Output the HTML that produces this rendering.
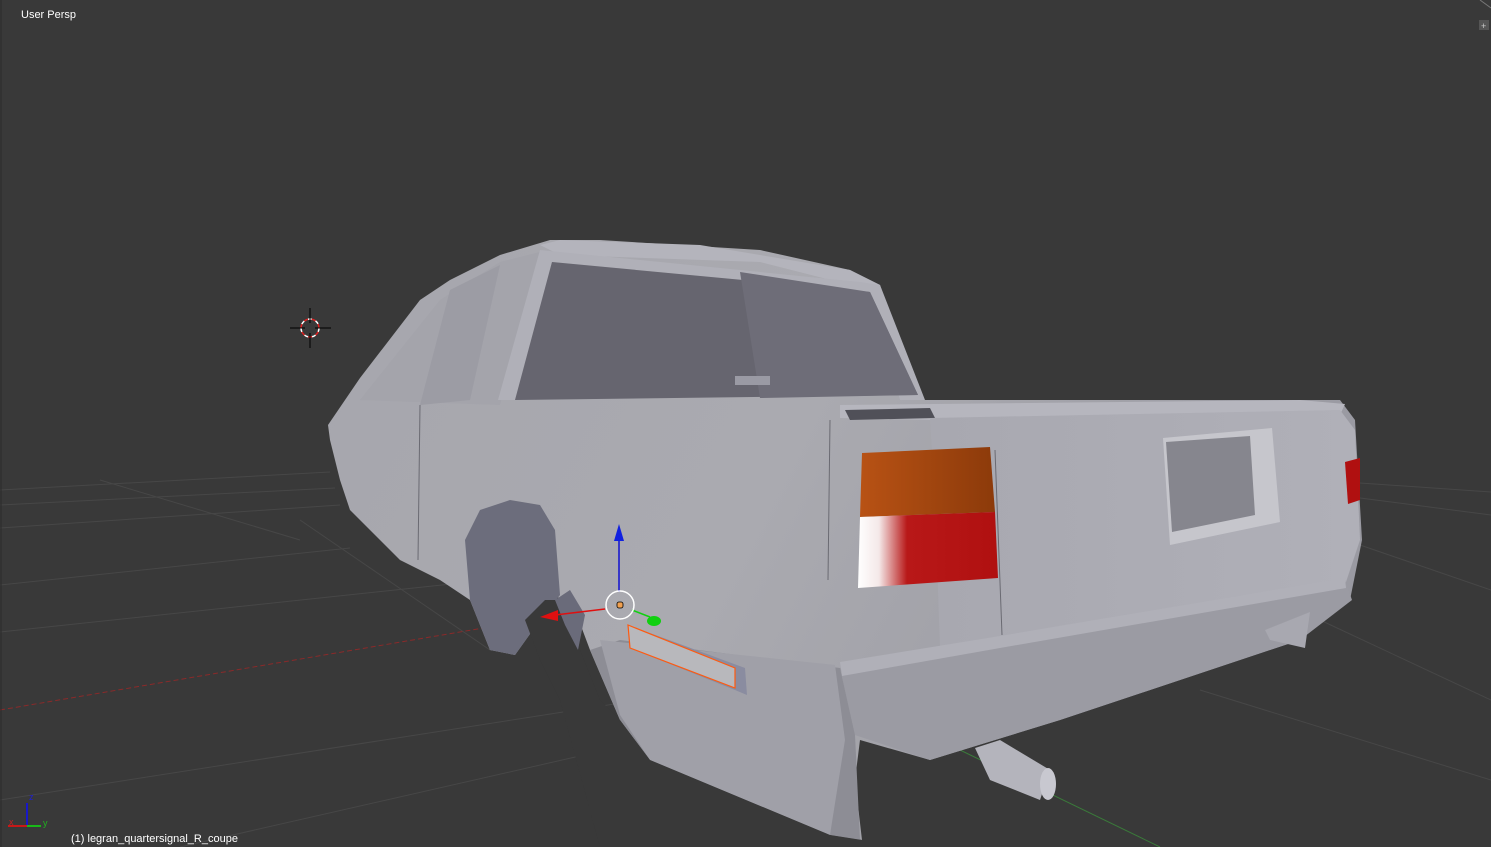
<!DOCTYPE html>
<html><head><meta charset="utf-8"><style>
html,body{margin:0;padding:0;background:#393939;overflow:hidden}
svg{display:block}
text{font-family:"Liberation Sans","DejaVu Sans",sans-serif}
</style></head><body>
<svg width="1491" height="847" viewBox="0 0 1491 847" xmlns="http://www.w3.org/2000/svg">
<defs>
<linearGradient id="side" x1="0" y1="0" x2="1" y2="0.3">
<stop offset="0" stop-color="#a6a6ad"/><stop offset="0.5" stop-color="#aaaab0"/><stop offset="1" stop-color="#9a9aa2"/></linearGradient>
<linearGradient id="rear" x1="0" y1="0" x2="1" y2="0">
<stop offset="0" stop-color="#a8a8b0"/><stop offset="1" stop-color="#b0b0b8"/></linearGradient>
<linearGradient id="red" x1="0" y1="0" x2="1" y2="0">
<stop offset="0" stop-color="#ffffff"/><stop offset="0.15" stop-color="#f4e8e8"/><stop offset="0.35" stop-color="#b81818"/><stop offset="1" stop-color="#b01010"/></linearGradient>
<linearGradient id="org" x1="0" y1="0" x2="1" y2="0">
<stop offset="0" stop-color="#b85214"/><stop offset="1" stop-color="#8c3a0a"/></linearGradient>
</defs>
<rect width="1491" height="847" fill="#393939"/>
<g stroke="#474747" stroke-width="1" fill="none">
<line x1="0" y1="490" x2="330" y2="472"/>
<line x1="0" y1="505" x2="335" y2="488"/>
<line x1="0" y1="528" x2="340" y2="505"/>
<line x1="0" y1="585" x2="350" y2="548"/>
<line x1="0" y1="632" x2="470" y2="582"/>
<line x1="0" y1="800" x2="640" y2="700"/>
<line x1="180" y1="847" x2="650" y2="740"/>
<line x1="1360" y1="483" x2="1491" y2="492"/>
<line x1="1360" y1="498" x2="1491" y2="515"/>
<line x1="1360" y1="545" x2="1491" y2="590"/>
<line x1="1320" y1="620" x2="1491" y2="700"/>
<line x1="1200" y1="690" x2="1491" y2="780"/>
<line x1="300" y1="520" x2="490" y2="650"/>
<line x1="100" y1="480" x2="300" y2="540"/>
</g>
<line x1="0" y1="710" x2="560" y2="615" stroke="#8a2a2a" stroke-width="1" stroke-dasharray="5,3"/>
<line x1="960" y1="750" x2="1160" y2="847" stroke="#3a7a3a" stroke-width="1"/>
<!-- car body -->
<polygon fill="url(#side)" points="328,425 360,378 420,300 450,280 500,255 550,240 600,240 760,250 850,270 880,285 920,400 1340,400 1355,420 1362,540 1350,600 1300,640 1060,720 930,760 860,740 855,780 862,840 830,835 650,760 620,720 590,650 575,610 555,595 540,620 515,655 490,650 470,600 440,580 400,560 350,510 340,480 330,440"/>
<!-- roof top edge -->
<polygon fill="#b4b4bc" points="540,245 560,240 700,245 850,270 880,285 870,290 760,262 560,255"/>
<!-- side glass -->
<polygon fill="#a4a4ab" points="360,400 440,300 500,262 540,252 500,405"/>
<polygon fill="#9c9ca4" points="450,290 500,265 470,400 420,405"/>
<!-- rear window -->
<polygon fill="#b0b0b8" points="540,250 560,252 860,282 880,285 925,400 900,400 870,292 552,262 515,400 498,400"/>
<polygon fill="#66656f" points="552,262 870,292 918,395 515,400"/>
<polygon fill="#6e6d78" points="740,272 870,292 918,395 760,398"/>
<rect x="735" y="376" width="35" height="9" fill="#9a9aa4"/>
<!-- rear deck -->
<polygon fill="#b6b6be" points="840,405 1300,400 1345,404 1340,415 935,420 840,418"/>
<polygon fill="#505058" points="845,410 930,408 935,418 850,420"/>
<!-- rear face -->
<polygon fill="url(#rear)" points="930,418 1340,410 1355,430 1360,540 1345,585 1000,640 940,648 935,500"/>
<!-- bumper -->
<polygon fill="#9b9ba3" points="840,668 1000,640 1345,580 1352,600 1300,640 1060,720 930,760 855,735"/>
<polygon fill="#b0b0b8" points="840,662 1000,636 1345,578 1346,588 1000,648 842,676"/>
<!-- lower side shading -->
<polygon fill="#8d8d95" points="590,650 620,640 840,668 855,735 860,840 830,835 650,760 620,720"/>
<polygon fill="#a0a0a8" points="600,640 835,665 845,740 830,835 650,760 620,715"/>
<!-- wheel well -->
<polygon fill="#6c6d7c" points="465,540 480,510 510,500 540,505 555,530 560,595 540,620 515,655 490,650 470,600"/>
<polygon fill="#393939" points="525,620 545,600 560,600 572,610 580,650 600,700 620,720 650,760 830,835 862,840 862,847 600,847 560,700 540,660"/>
<polygon fill="#6a6b7a" points="555,600 570,590 585,615 578,650 565,625"/>
<!-- taillight -->
<polygon fill="url(#org)" points="862,453 990,447 995,512 860,517"/>
<polygon fill="url(#red)" points="860,517 995,512 998,578 858,588"/>
<polygon fill="#b01010" points="1345,462 1360,458 1360,500 1348,504"/>
<!-- license recess -->
<polygon fill="#c6c6cc" points="1163,438 1272,428 1280,522 1170,545"/>
<polygon fill="#86868e" points="1166,442 1250,436 1255,515 1172,532"/>
<!-- exhaust -->
<polygon fill="#b4b4bc" points="975,748 1000,740 1050,770 1040,800 990,780"/>
<ellipse cx="1048" cy="784" rx="8" ry="16" fill="#c8c8d0"/>
<polygon fill="#a8a8b0" points="1265,630 1310,612 1305,648 1270,640"/>
<!-- panel lines -->
<g stroke="#6a6a72" stroke-width="1" fill="none">
<line x1="420" y1="405" x2="418" y2="560"/>
<line x1="830" y1="420" x2="828" y2="580"/>
<line x1="995" y1="450" x2="1002" y2="635"/>
</g>
<!-- license plate on side -->
<polygon fill="#8a8ca0" points="628,625 745,668 747,695 735,690 630,648"/>
<polygon fill="#b8b8bc" points="628,625 735,668 735,688 630,648" stroke="#ff5a10" stroke-width="1.2"/>
<!-- manipulator -->
<line x1="619" y1="540" x2="619" y2="592" stroke="#1010d0" stroke-width="1.5"/>
<polygon points="619,524 614,541 624,541" fill="#1020e0"/>
<line x1="605" y1="609" x2="555" y2="615" stroke="#e01010" stroke-width="1.5"/>
<polygon points="540,617 558,610 558,621" fill="#e01010"/>
<line x1="632" y1="610" x2="650" y2="617" stroke="#10d010" stroke-width="1.5"/>
<ellipse cx="654" cy="621" rx="7" ry="5" fill="#10d010"/>
<circle cx="620" cy="605" r="14" fill="none" stroke="#fff" stroke-width="1.5"/>
<rect x="617" y="602" width="6" height="6" rx="2" fill="#f0a050" stroke="#000" stroke-width="0.8"/>
<!-- 3D cursor -->
<circle cx="310" cy="328" r="9" fill="none" stroke="#fff" stroke-width="1.5" stroke-dasharray="4,4"/>
<circle cx="310" cy="328" r="9" fill="none" stroke="#e02020" stroke-width="1.5" stroke-dasharray="4,4" stroke-dashoffset="4"/>
<g stroke="#000" stroke-width="1">
<line x1="290" y1="328" x2="305" y2="328"/><line x1="315" y1="328" x2="331" y2="328"/>
<line x1="310" y1="308" x2="310" y2="323"/><line x1="310" y1="333" x2="310" y2="348"/>
</g>
<!-- axes -->
<line x1="27" y1="826" x2="27" y2="803" stroke="#1818c8" stroke-width="2"/>
<line x1="8" y1="826" x2="27" y2="826" stroke="#c81818" stroke-width="2"/>
<line x1="27" y1="826" x2="41" y2="826" stroke="#18b818" stroke-width="2"/>
<text x="29" y="800" font-size="9" fill="#2020d0">z</text>
<text x="9" y="825" font-size="9" fill="#c82020">x</text>
<text x="43" y="826" font-size="9" fill="#20b020">y</text>
<text x="21" y="18" font-size="11" fill="#ffffff">User Persp</text>
<text x="71" y="842" font-size="11" fill="#ffffff">(1) legran_quartersignal_R_coupe</text>
<line x1="1" y1="0" x2="1" y2="847" stroke="#2a2a2a"/>
<line x1="1480" y1="0" x2="1491" y2="8" stroke="#777"/>
<rect x="1479" y="20" width="10" height="10" fill="#555"/>
<text x="1481" y="29" font-size="9" fill="#ccc">+</text>
</svg>
</body></html>
